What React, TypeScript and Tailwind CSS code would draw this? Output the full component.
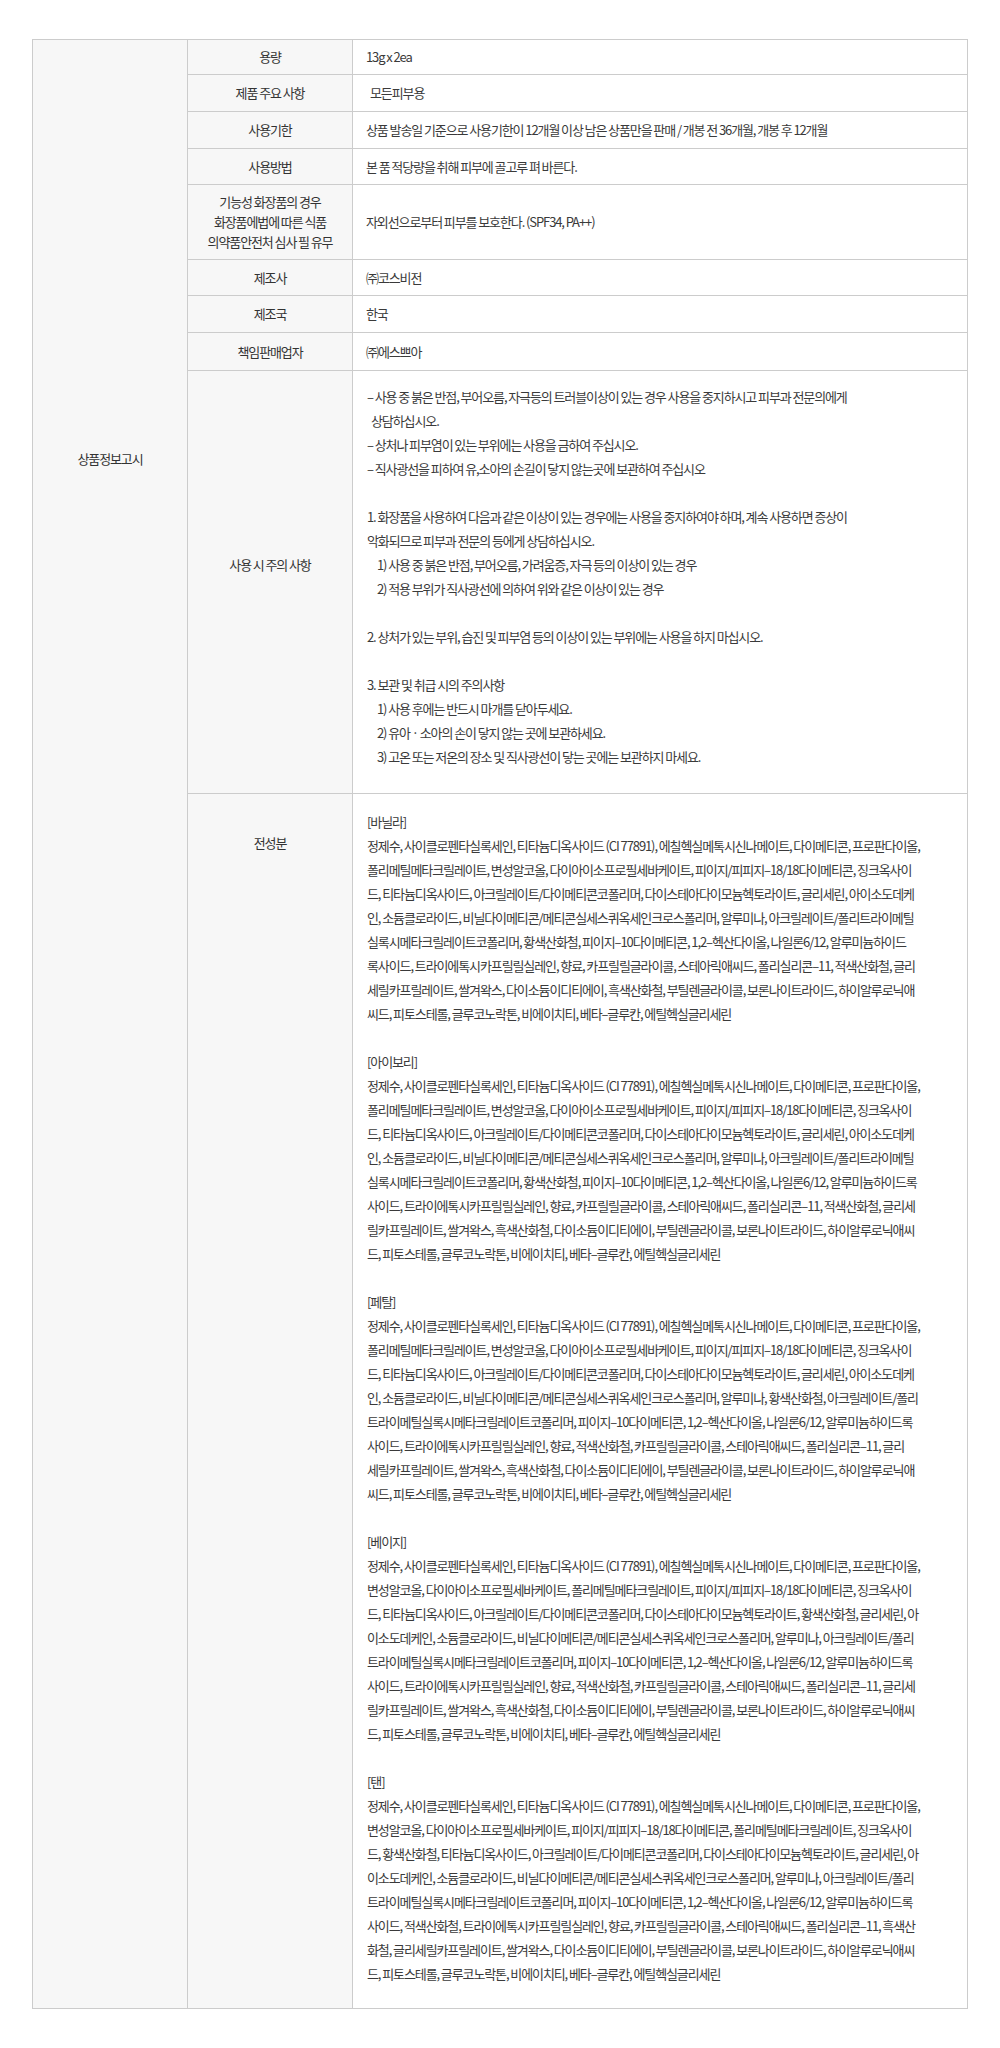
import clsx from 'clsx';
import { FC } from 'react';

type Line = { text: string; indent?: 0 | 1 | 2 };

const topRows: { label: string[]; value: string; h: string; indent?: boolean }[] = [
  { label: ['용량'], value: '13g x 2ea', h: 'h-[35px]' },
  { label: ['제품 주요 사항'], value: '모든피부용', h: 'h-[37px]', indent: true },
  {
    label: ['사용기한'],
    value: '상품 발송일 기준으로 사용기한이 12개월 이상 남은 상품만을 판매 / 개봉 전 36개월, 개봉 후 12개월',
    h: 'h-[37px]',
  },
  { label: ['사용방법'], value: '본 품 적당량을 취해 피부에 골고루 펴 바른다.', h: 'h-[36px]' },
  {
    label: ['기능성 화장품의 경우', '화장품에법에 따른 식품', '의약품안전처 심사 필 유무'],
    value: '자외선으로부터 피부를 보호한다. (SPF34, PA++)',
    h: 'h-[75px]',
  },
  { label: ['제조사'], value: '㈜코스비전', h: 'h-[36px]' },
  { label: ['제조국'], value: '한국', h: 'h-[37px]' },
  { label: ['책임판매업자'], value: '㈜에스쁘아', h: 'h-[38px]' },
];

const warnings: Line[] = [
  { text: '– 사용 중 붉은 반점, 부어오름, 자극등의 트러블이상이 있는 경우 사용을 중지하시고 피부과 전문의에게' },
  { text: '상담하십시오.', indent: 1 },
  { text: '– 상처나 피부염이 있는 부위에는 사용을 금하여 주십시오.' },
  { text: '– 직사광선을 피하여 유,소아의 손길이 닿지 않는곳에 보관하여 주십시오' },
  { text: '' },
  { text: '1. 화장품을 사용하여 다음과 같은 이상이 있는 경우에는 사용을 중지하여야 하며, 계속 사용하면 증상이' },
  { text: '악화되므로 피부과 전문의 등에게 상담하십시오.' },
  { text: '1) 사용 중 붉은 반점, 부어오름, 가려움증, 자극 등의 이상이 있는 경우', indent: 2 },
  { text: '2) 적용 부위가 직사광선에 의하여 위와 같은 이상이 있는 경우', indent: 2 },
  { text: '' },
  { text: '2. 상처가 있는 부위, 습진 및 피부염 등의 이상이 있는 부위에는 사용을 하지 마십시오.' },
  { text: '' },
  { text: '3. 보관 및 취급 시의 주의사항' },
  { text: '1) 사용 후에는 반드시 마개를 닫아두세요.', indent: 2 },
  { text: '2) 유아 · 소아의 손이 닿지 않는 곳에 보관하세요.', indent: 2 },
  { text: '3) 고온 또는 저온의 장소 및 직사광선이 닿는 곳에는 보관하지 마세요.', indent: 2 },
];

const ingredients: { name: string; lines: string[] }[] = [
  {
    name: '[바닐라]',
    lines: [
      '정제수, 사이클로펜타실록세인, 티타늄디옥사이드 (CI 77891), 에칠헥실메톡시신나메이트, 다이메티콘, 프로판다이올,',
      '폴리메틸메타크릴레이트, 변성알코올, 다이아이소프로필세바케이트, 피이지/피피지–18/18다이메티콘, 징크옥사이',
      '드, 티타늄디옥사이드, 아크릴레이트/다이메티콘코폴리머, 다이스테아다이모늄헥토라이트, 글리세린, 아이소도데케',
      '인, 소듐클로라이드, 비닐다이메티콘/메티콘실세스퀴옥세인크로스폴리머, 알루미나, 아크릴레이트/폴리트라이메틸',
      '실록시메타크릴레이트코폴리머, 황색산화철, 피이지–10다이메티콘, 1,2–헥산다이올, 나일론6/12, 알루미늄하이드',
      '록사이드, 트라이에톡시카프릴릴실레인, 향료, 카프릴릴글라이콜, 스테아릭애씨드, 폴리실리콘–11, 적색산화철, 글리',
      '세릴카프릴레이트, 쌀겨왁스, 다이소듐이디티에이, 흑색산화철, 부틸렌글라이콜, 보론나이트라이드, 하이알루로닉애',
      '씨드, 피토스테롤, 글루코노락톤, 비에이치티, 베타–글루칸, 에틸헥실글리세린',
    ],
  },
  {
    name: '[아이보리]',
    lines: [
      '정제수, 사이클로펜타실록세인, 티타늄디옥사이드 (CI 77891), 에칠헥실메톡시신나메이트, 다이메티콘, 프로판다이올,',
      '폴리메틸메타크릴레이트, 변성알코올, 다이아이소프로필세바케이트, 피이지/피피지–18/18다이메티콘, 징크옥사이',
      '드, 티타늄디옥사이드, 아크릴레이트/다이메티콘코폴리머, 다이스테아다이모늄헥토라이트, 글리세린, 아이소도데케',
      '인, 소듐클로라이드, 비닐다이메티콘/메티콘실세스퀴옥세인크로스폴리머, 알루미나, 아크릴레이트/폴리트라이메틸',
      '실록시메타크릴레이트코폴리머, 황색산화철, 피이지–10다이메티콘, 1,2–헥산다이올, 나일론6/12, 알루미늄하이드록',
      '사이드, 트라이에톡시카프릴릴실레인, 향료, 카프릴릴글라이콜, 스테아릭애씨드, 폴리실리콘–11, 적색산화철, 글리세',
      '릴카프릴레이트, 쌀겨왁스, 흑색산화철, 다이소듐이디티에이, 부틸렌글라이콜, 보론나이트라이드, 하이알루로닉애씨',
      '드, 피토스테롤, 글루코노락톤, 비에이치티, 베타–글루칸, 에틸헥실글리세린',
    ],
  },
  {
    name: '[페탈]',
    lines: [
      '정제수, 사이클로펜타실록세인, 티타늄디옥사이드 (CI 77891), 에칠헥실메톡시신나메이트, 다이메티콘, 프로판다이올,',
      '폴리메틸메타크릴레이트, 변성알코올, 다이아이소프로필세바케이트, 피이지/피피지–18/18다이메티콘, 징크옥사이',
      '드, 티타늄디옥사이드, 아크릴레이트/다이메티콘코폴리머, 다이스테아다이모늄헥토라이트, 글리세린, 아이소도데케',
      '인, 소듐클로라이드, 비닐다이메티콘/메티콘실세스퀴옥세인크로스폴리머, 알루미나, 황색산화철, 아크릴레이트/폴리',
      '트라이메틸실록시메타크릴레이트코폴리머, 피이지–10다이메티콘, 1,2–헥산다이올, 나일론6/12, 알루미늄하이드록',
      '사이드, 트라이에톡시카프릴릴실레인, 향료, 적색산화철, 카프릴릴글라이콜, 스테아릭애씨드, 폴리실리콘–11, 글리',
      '세릴카프릴레이트, 쌀겨왁스, 흑색산화철, 다이소듐이디티에이, 부틸렌글라이콜, 보론나이트라이드, 하이알루로닉애',
      '씨드, 피토스테롤, 글루코노락톤, 비에이치티, 베타–글루칸, 에틸헥실글리세린',
    ],
  },
  {
    name: '[베이지]',
    lines: [
      '정제수, 사이클로펜타실록세인, 티타늄디옥사이드 (CI 77891), 에칠헥실메톡시신나메이트, 다이메티콘, 프로판다이올,',
      '변성알코올, 다이아이소프로필세바케이트, 폴리메틸메타크릴레이트, 피이지/피피지–18/18다이메티콘, 징크옥사이',
      '드, 티타늄디옥사이드, 아크릴레이트/다이메티콘코폴리머, 다이스테아다이모늄헥토라이트, 황색산화철, 글리세린, 아',
      '이소도데케인, 소듐클로라이드, 비닐다이메티콘/메티콘실세스퀴옥세인크로스폴리머, 알루미나, 아크릴레이트/폴리',
      '트라이메틸실록시메타크릴레이트코폴리머, 피이지–10다이메티콘, 1,2–헥산다이올, 나일론6/12, 알루미늄하이드록',
      '사이드, 트라이에톡시카프릴릴실레인, 향료, 적색산화철, 카프릴릴글라이콜, 스테아릭애씨드, 폴리실리콘–11, 글리세',
      '릴카프릴레이트, 쌀겨왁스, 흑색산화철, 다이소듐이디티에이, 부틸렌글라이콜, 보론나이트라이드, 하이알루로닉애씨',
      '드, 피토스테롤, 글루코노락톤, 비에이치티, 베타–글루칸, 에틸헥실글리세린',
    ],
  },
  {
    name: '[탠]',
    lines: [
      '정제수, 사이클로펜타실록세인, 티타늄디옥사이드 (CI 77891), 에칠헥실메톡시신나메이트, 다이메티콘, 프로판다이올,',
      '변성알코올, 다이아이소프로필세바케이트, 피이지/피피지–18/18다이메티콘, 폴리메틸메타크릴레이트, 징크옥사이',
      '드, 황색산화철, 티타늄디옥사이드, 아크릴레이트/다이메티콘코폴리머, 다이스테아다이모늄헥토라이트, 글리세린, 아',
      '이소도데케인, 소듐클로라이드, 비닐다이메티콘/메티콘실세스퀴옥세인크로스폴리머, 알루미나, 아크릴레이트/폴리',
      '트라이메틸실록시메타크릴레이트코폴리머, 피이지–10다이메티콘, 1,2–헥산다이올, 나일론6/12, 알루미늄하이드록',
      '사이드, 적색산화철, 트라이에톡시카프릴릴실레인, 향료, 카프릴릴글라이콜, 스테아릭애씨드, 폴리실리콘–11, 흑색산',
      '화철, 글리세릴카프릴레이트, 쌀겨왁스, 다이소듐이디티에이, 부틸렌글라이콜, 보론나이트라이드, 하이알루로닉애씨',
      '드, 피토스테롤, 글루코노락톤, 비에이치티, 베타–글루칸, 에틸헥실글리세린',
    ],
  },
];

// one fixed line of text; blank lines keep their height
const TextLine: FC<Line> = ({ text, indent }) => (
  <div
    className={clsx(
      'h-6 leading-6 whitespace-nowrap',
      indent === 1 && 'pl-[4px]',
      indent === 2 && 'pl-[10px]',
    )}
  >
    {text || '\u00a0'}
  </div>
);

export default function App() {
  return (
    <div
      className="w-[1000px] min-h-[2048px] bg-white pt-[39px] pb-[39px] text-[13px] tracking-[-1.1px] text-[#3a3a3a]"
      style={{ fontFamily: '"Noto Sans CJK KR", "Noto Sans", sans-serif' }}
    >
      <div className="mx-[32px] flex border border-[#cccccc]">
        {/* section title */}
        <div className="w-[155px] shrink-0 border-r border-[#cccccc] bg-[#f7f7f7] pt-[407px] text-center leading-6 text-[#333]">
          상품정보고시
        </div>

        <div className="flex min-w-0 flex-1 flex-col">
          {topRows.map((row) => (
            <div
              key={row.label[0]}
              className={clsx('flex border-b border-[#cccccc]', row.h)}
            >
              <div className="flex w-[165px] shrink-0 flex-col items-center justify-center border-r border-[#cccccc] bg-[#f7f7f7] text-center leading-5 text-[#333]">
                {row.label.map((l) => (
                  <div key={l}>{l}</div>
                ))}
              </div>
              <div
                className={clsx(
                  'flex flex-1 items-center whitespace-nowrap leading-5',
                  row.indent ? 'pl-[17px]' : 'pl-[13px]',
                )}
              >
                {row.value}
              </div>
            </div>
          ))}

          {/* usage warnings */}
          <div className="flex border-b border-[#cccccc]">
            <div className="w-[165px] shrink-0 border-r border-[#cccccc] bg-[#f7f7f7] pt-[182px] text-center leading-6 text-[#333]">
              사용 시 주의 사항
            </div>
            <div className="flex-1 pl-[14px] pt-[14px] pb-[24px]">
              {warnings.map((l, i) => (
                <TextLine key={i} {...l} />
              ))}
            </div>
          </div>

          {/* full ingredients */}
          <div className="flex">
            <div className="w-[165px] shrink-0 border-r border-[#cccccc] bg-[#f7f7f7] pt-[37px] text-center leading-6 text-[#333]">
              전성분
            </div>
            <div className="flex-1 pl-[14px] pt-[16px] pb-[22px]">
              {ingredients.map((block, bi) => (
                <div key={block.name}>
                  {bi > 0 && <TextLine text="" />}
                  <TextLine text={block.name} />
                  {block.lines.map((l, i) => (
                    <TextLine key={i} text={l} />
                  ))}
                </div>
              ))}
            </div>
          </div>
        </div>
      </div>
    </div>
  );
}
